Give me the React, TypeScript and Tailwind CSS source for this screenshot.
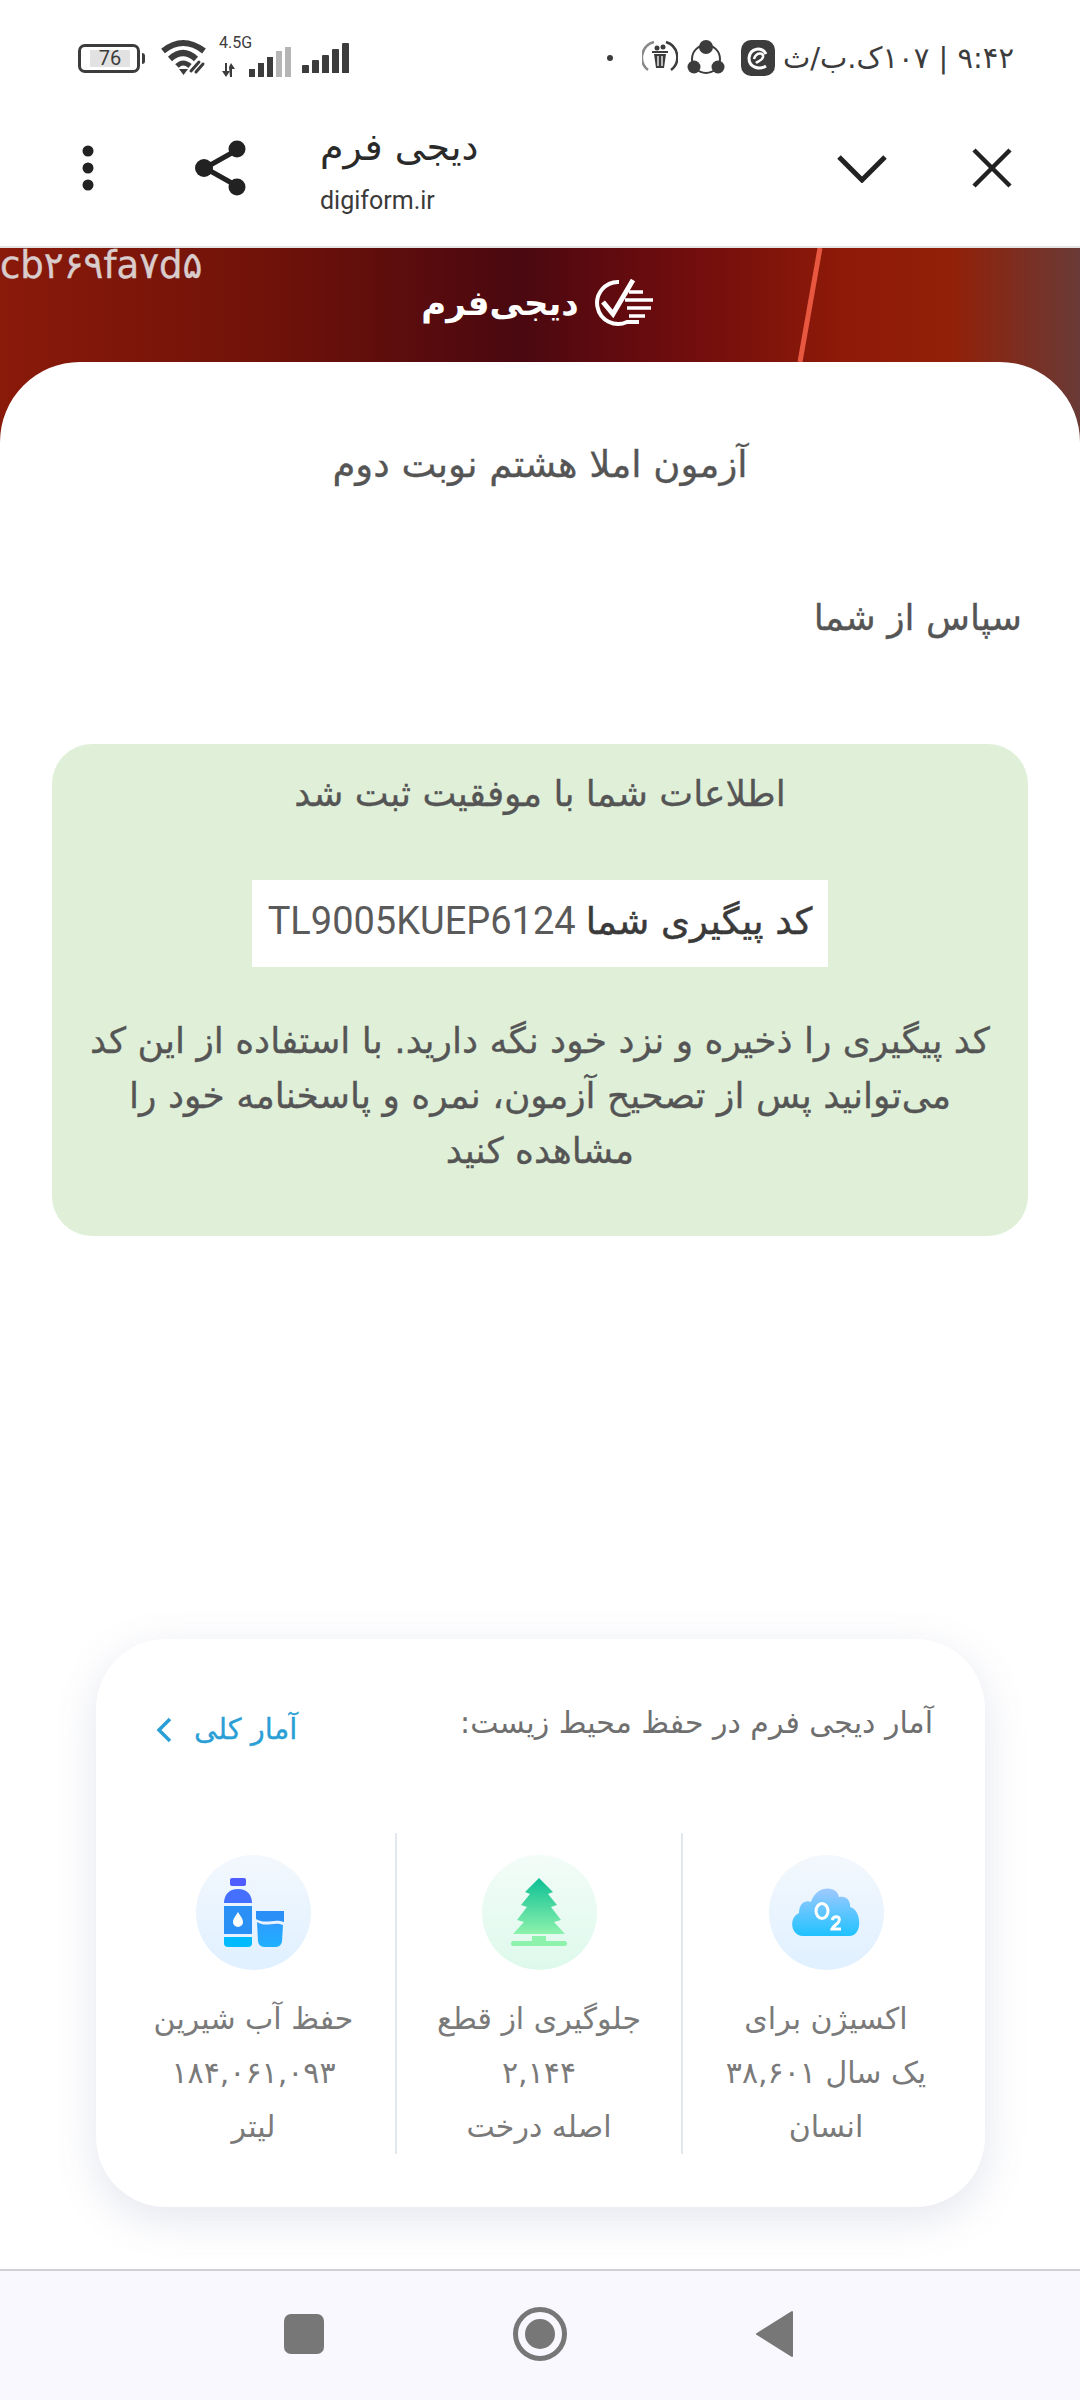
import React from "react";

const fa = { fontFamily: '"DejaVu Sans", "Noto Sans", sans-serif' };

function Battery() {
  return (
    <div className="flex items-center">
      <div className="w-[62px] h-[29px] rounded-[7px] border-[3px] border-[#3c3c3c] p-[3px] flex">
        <div className="w-[40px] h-full bg-[#e2e2e2] flex items-center justify-center ml-[6px] text-[20px] text-[#3c3c3c] font-['Roboto']">76</div>
      </div>
      <div className="w-[3px] h-[11px] ml-[2px] bg-[#3c3c3c] rounded-r" />
    </div>
  );
}

function Wifi() {
  return (
    <svg width="50" height="38" viewBox="0 0 48 38" fill="none">
      <path d="M3 12 Q23 -4 44 12" stroke="#3c3c3c" strokeWidth="6" />
      <path d="M10 20 Q23 8 36 20" stroke="#3c3c3c" strokeWidth="6" />
      <path d="M17 27 Q23 21 30 27" stroke="#3c3c3c" strokeWidth="5" />
      <path d="M19 30 L23.500 36 L28 30 Z" fill="#3c3c3c" />
      <path d="M31 32 L39 23 M36 33 L43 25" stroke="#3c3c3c" strokeWidth="3" strokeLinecap="round" />
    </svg>
  );
}

function Bars() {
  const hs = [8, 13, 18, 24, 30];
  return (
    <div className="flex items-end gap-[3px] h-[30px]">
      {hs.map((h, i) => (
        <div key={i} className="w-[7px] bg-[#3c3c3c] rounded-t-[1px]" style={{ height: h }} />
      ))}
    </div>
  );
}

function Mobile45() {
  return (
    <div className="relative w-[72px] h-[40px] ml-[10px]">
      <span className="absolute left-0 top-[-4px] text-[16px] leading-[18px] text-[#3c3c3c] font-['Roboto']">4.5G</span>
      <svg className="absolute left-[2px] bottom-[1px]" width="14" height="14" viewBox="0 0 14 14">
        <path d="M4 0H6V8H9L5 14L1 8H4Z M9 14H11V6H14L10 0L8 4Z" fill="#3c3c3c" />
      </svg>
      <div className="absolute right-0 bottom-[1px] flex items-end gap-[3px]">
        <div className="w-[6px] h-[8px] bg-[#3c3c3c]" />
        <div className="w-[6px] h-[14px] bg-[#3c3c3c]" />
        <div className="w-[6px] h-[20px] bg-[#3c3c3c]" />
        <div className="w-[6px] h-[26px] bg-[#b5b5b5]" />
        <div className="w-[6px] h-[30px] bg-[#b5b5b5]" />
      </div>
    </div>
  );
}

function TrashIcon() {
  return (
    <svg width="36" height="38" viewBox="0 0 36 38" fill="none">
      <path d="M12 3 A16 16 0 0 0 6 31" stroke="#888" strokeWidth="2.500" />
      <path d="M24 3 A16 16 0 0 1 29 31" stroke="#3c3c3c" strokeWidth="2.500" />
      <path d="M12 15H24L22 29H14Z" fill="#3c3c3c" />
      <path d="M10 13H26" stroke="#3c3c3c" strokeWidth="2" />
      <circle cx="15" cy="9" r="2.500" fill="#3c3c3c" />
      <circle cx="21" cy="8" r="2.500" fill="#3c3c3c" />
      <path d="M16 17V27M20 17V27" stroke="#fff" strokeWidth="1.300" />
    </svg>
  );
}

function ShareItIcon() {
  return (
    <svg width="38" height="38" viewBox="0 0 38 38" fill="none">
      <circle cx="19" cy="20" r="14" stroke="#3c3c3c" strokeWidth="2" />
      <circle cx="19" cy="8" r="7" fill="#3c3c3c" />
      <circle cx="7" cy="28" r="6.500" fill="#3c3c3c" />
      <circle cx="31" cy="28" r="6.500" fill="#3c3c3c" />
    </svg>
  );
}

function EIcon() {
  return (
    <svg width="36" height="38" viewBox="0 0 36 38" fill="none">
      <rect x="1" y="1" width="34" height="36" rx="10" fill="#3c3c3c" />
      <path d="M26 15 C22 7 10 9 9 19 C9 29 20 31 26 27" stroke="#fff" strokeWidth="3" />
      <path d="M14 20 C16 13 24 13 23 18 C22 22 18 22 16 24" stroke="#fff" strokeWidth="2.500" />
    </svg>
  );
}

function StatusBar() {
  return (
    <div className="h-[112px] pl-[78px] pr-[66px] flex items-center justify-between pt-[4px]">
      <div className="flex items-center">
        <Battery />
        <div className="ml-[14px]"><Wifi /></div>
        <Mobile45 />
        <div className="ml-[11px]"><Bars /></div>
      </div>
      <div className="flex items-center">
        <div className="w-[6px] h-[6px] rounded-full bg-[#3c3c3c] mr-[29px]" />
        <TrashIcon />
        <div className="ml-[9px]"><ShareItIcon /></div>
        <div className="ml-[15px]"><EIcon /></div>
        <span dir="rtl" className="ml-[7px] text-[29px] leading-none text-[#3c3c3c] whitespace-nowrap" style={fa}>۹:۴۲ | ۱۰۷ک.ب/ث</span>
      </div>
    </div>
  );
}

function Toolbar() {
  return (
    <div className="h-[136px] pb-[22px] flex items-center border-b-2 border-[#e4e4e4] bg-white">
      <svg className="ml-[82px]" width="12" height="46" viewBox="0 0 12 46">
        <circle cx="6" cy="6" r="5.500" fill="#222" />
        <circle cx="6" cy="23" r="5.500" fill="#222" />
        <circle cx="6" cy="40" r="5.500" fill="#222" />
      </svg>
      <svg className="ml-[101px]" width="52" height="56" viewBox="0 0 52 56" fill="none">
        <path d="M42 10 L10 28 L42 46" stroke="#222" strokeWidth="5" />
        <circle cx="42" cy="9" r="8.500" fill="#222" />
        <circle cx="9" cy="28" r="9" fill="#222" />
        <circle cx="42" cy="47" r="8.500" fill="#222" />
      </svg>
      <div className="ml-[73px] flex flex-col items-start pt-[4px]">
        <span dir="rtl" className="text-[38px] leading-[50px] text-[#2a2a2a]" style={fa}>دیجی فرم</span>
        <span className="text-[25px] leading-[34px] mt-[12px] text-[#3a3a3a] font-['Roboto']">digiform.ir</span>
      </div>
      <div className="flex-1" />
      <svg width="52" height="30" viewBox="0 0 52 30" fill="none">
        <path d="M3 4 L26 27 L49 4" stroke="#222" strokeWidth="5" />
      </svg>
      <svg className="ml-[84px] mr-[68px]" width="40" height="40" viewBox="0 0 40 40" fill="none">
        <path d="M2 2 L38 38 M38 2 L2 38" stroke="#222" strokeWidth="4.500" />
      </svg>
    </div>
  );
}

function BannerHeader() {
  return (
    <div className="relative z-10 h-[114px]">
      <span className="absolute left-0 top-[0px] text-[37px] leading-[36px] text-[#d9cccc] [-webkit-text-stroke:0.4px_#d9cccc]" style={fa}>cb۲۶۹fa۷d۵</span>
      <div className="flex items-center justify-center pt-[30px] gap-[8px]">
        <span dir="rtl" className="text-[34px] leading-[46px] font-bold text-white" style={fa}>دیجی‌فرم</span>
        <svg width="72" height="50" viewBox="0 0 68 50" fill="none">
          <path d="M30 4 A21 21 0 1 0 38 44 H50" stroke="#fff" strokeWidth="4" />
          <path d="M14 24 L24 36 L44 2" stroke="#fff" strokeWidth="5" />
          <path d="M40 14H54M36 22H64M38 30H62M40 38H56" stroke="#fff" strokeWidth="3.500" />
        </svg>
      </div>
    </div>
  );
}

function Stat({ lines, icon, bg }: { lines: string[]; icon: React.ReactNode; bg: string }) {
  return (
    <div className="flex flex-col items-center h-full">
      <div className={"w-[115px] h-[115px] rounded-full flex items-center justify-center mt-[22px] " + bg}>{icon}</div>
      <div className="mt-[22px] text-center text-[30px] leading-[54px] text-[#7a7a7a] whitespace-nowrap" style={fa}>
        {lines.map((l) => <div key={l}>{l}</div>)}
      </div>
    </div>
  );
}

function BottleIcon() {
  return (
    <svg width="60" height="70" viewBox="0 0 60 70">
      <defs>
        <linearGradient id="b2" x1="0" y1="0" x2="0" y2="1"><stop offset="0" stopColor="#2f9bff" /><stop offset="1" stopColor="#1fb0ff" /></linearGradient>
      </defs>
      <rect x="6" y="0" width="16" height="8" rx="2" fill="#4f5cff" />
      <path d="M14 11 C5 11 0 17 0 25 H28 C28 17 23 11 14 11Z" fill="#4570ff" />
      <rect x="0" y="28" width="28" height="28" fill="#2a90f5" />
      <path d="M0 59 H28 V65 A4 4 0 0 1 24 69 H4 A4 4 0 0 1 0 65Z" fill="#00bbff" />
      <path d="M14 34 C11 39 9 41 9 44 A5 5 0 0 0 19 44 C19 41 17 39 14 34Z" fill="#fff" />
      <path d="M32 33 H60 V44 C50 40 42 47 32 41Z" fill="#2a8ff7" />
      <path d="M33 44 C42 50 50 43 59 47 L58 63 A6 6 0 0 1 52 69 H40 A6 6 0 0 1 34 63Z" fill="url(#b2)" />
    </svg>
  );
}

function TreeIcon() {
  return (
    <svg width="64" height="70" viewBox="0 0 64 70">
      <defs>
        <linearGradient id="t1" x1="0" y1="0" x2="0" y2="1"><stop offset="0" stopColor="#0cbf95" /><stop offset="1" stopColor="#8df2ac" /></linearGradient>
      </defs>
      <path d="M32 0 L46 14 L41 16 L50 27 L44 29 L54 42 L47 44 L58 56 H6 L17 44 L10 42 L20 29 L14 27 L23 16 L18 14Z" fill="url(#t1)" />
      <rect x="25" y="58" width="14" height="6" fill="#8df2ac" />
      <rect x="4" y="63" width="56" height="5" rx="2.500" fill="#8df2ac" />
    </svg>
  );
}

function CloudIcon() {
  return (
    <svg width="70" height="50" viewBox="0 0 70 50">
      <defs>
        <linearGradient id="c1" x1="0" y1="0" x2="0" y2="1"><stop offset="0" stopColor="#9fc9ff" /><stop offset="1" stopColor="#1fc2ff" /></linearGradient>
      </defs>
      <path d="M12 48 C0 48 -3 30 8 25 C8 14 16 12 20 14 C25 -3 46 -3 48 9 C56 7 60 14 59 19 C71 22 72 48 58 48Z" fill="url(#c1)" />
      <ellipse cx="31" cy="23" rx="6" ry="7.500" fill="none" stroke="#fff" strokeWidth="3" />
      <path d="M41 32 C43 27 50 28 48 33 C47 36 42 38 41 41 H50" fill="none" stroke="#fff" strokeWidth="3" />
    </svg>
  );
}

function StatsCard() {
  return (
    <div className="mx-[96px] w-[889px] h-[568px] rounded-[70px] bg-white shadow-[0_12px_44px_rgba(90,100,150,0.16)] px-[16px] flex flex-col">
      <div className="h-[194px] flex items-center justify-between pl-[43px] pr-[36px] pb-[12px]" dir="rtl">
        <span className="text-[30px] text-[#6f6f6f] pb-[16px] whitespace-nowrap" style={fa}>آمار دیجی فرم در حفظ محیط زیست:</span>
        <div className="flex items-center gap-[21px]">
          <span className="text-[29px] text-[#2a9fd6] whitespace-nowrap [-webkit-text-stroke:0.3px_#2a9fd6]" style={fa}>آمار کلی</span>
          <svg width="18" height="28" viewBox="0 0 18 28" fill="none"><path d="M15 3 L4 14 L15 25" stroke="#2a9fd6" strokeWidth="3.500" /></svg>
        </div>
      </div>
      <div className="grid grid-cols-[283px_288px_1fr] h-[321px]">
        <Stat bg="bg-gradient-to-b from-[#f3f8fd] to-[#e0f0ff]" icon={<BottleIcon />} lines={["حفظ آب شیرین", "۱۸۴,۰۶۱,۰۹۳", "لیتر"]} />
        <div className="border-x-2 border-[#e3e6ee]">
          <Stat bg="bg-gradient-to-b from-[#f3fcf8] to-[#def9ec]" icon={<TreeIcon />} lines={["جلوگیری از قطع", "۲,۱۴۴", "اصله درخت"]} />
        </div>
        <Stat bg="bg-gradient-to-b from-[#f3f8fd] to-[#e0f0ff]" icon={<CloudIcon />} lines={["اکسیژن برای", "یک سال ۳۸,۶۰۱", "انسان"]} />
      </div>
    </div>
  );
}

function NavBar() {
  return (
    <div className="h-[131px] border-t-2 border-[#d0d0d6] bg-[#f8f8fe] flex items-center pb-[4px]">
      <div className="ml-[284px] w-[40px] h-[40px] rounded-[7px] bg-[#777]" />
      <div className="ml-[189px] w-[54px] h-[54px] rounded-full border-[5px] border-[#777] flex items-center justify-center">
        <div className="w-[30px] h-[30px] rounded-full bg-[#777]" />
      </div>
      <svg className="ml-[188px]" width="40" height="48" viewBox="0 0 40 48">
        <path d="M37 2 V46 L2 24Z" fill="#777" stroke="#777" strokeWidth="2" strokeLinejoin="round" />
      </svg>
    </div>
  );
}

export default function App() {
  return (
    <div className="w-[1080px] h-[2400px] bg-white flex flex-col overflow-hidden">
      <StatusBar />
      <Toolbar />
      <div className="relative flex-1 flex flex-col">
        <div className="absolute inset-x-0 top-0 h-[240px] bg-[linear-gradient(90deg,#8a1a0a_0%,#701209_25%,#4a0810_48%,#6d0c0e_62%,#8e1a08_78%,#922008_88%,#6a3a36_100%)]" />
        <svg className="absolute top-0 left-[790px]" width="40" height="114" viewBox="0 0 40 114">
          <path d="M30 0 L10 114" stroke="#e8573f" strokeWidth="5" />
        </svg>
        <BannerHeader />
        <div className="relative z-10 flex-1 rounded-t-[80px] bg-white flex flex-col" dir="rtl" style={fa}>
          <h1 className="mt-[81px] text-center text-[37px] leading-[44px] text-[#555] font-normal [-webkit-text-stroke:0.3px_#555]">آزمون املا هشتم نوبت دوم</h1>
          <p className="mt-[109px] mr-[58px] text-[36px] leading-[44px] text-[#555] [-webkit-text-stroke:0.3px_#555]">سپاس از شما</p>
          <div className="mt-[104px] mx-[52px] h-[492px] rounded-[40px] bg-[#dfefd8] flex flex-col items-center text-center text-[#555] px-[30px] pt-[28px] [-webkit-text-stroke:0.3px_#555]">
            <p className="text-[36px] leading-[44px]">اطلاعات شما با موفقیت ثبت شد</p>
            <div className="mt-[64px] w-[576px] h-[87px] bg-white flex items-center justify-center text-[37px] pb-[4px] whitespace-nowrap">
              <span className="text-[#3a3a3a] [-webkit-text-stroke:0.5px_#3a3a3a]">کد پیگیری شما</span>
              <span className="font-['Roboto'] mr-[10px] text-[#5a5a5a] text-[38px] [-webkit-text-stroke:0px]">TL9005KUEP6124</span>
            </div>
            <p className="mt-[46px] text-[36px] leading-[55px]">کد پیگیری را ذخیره و نزد خود نگه دارید. با استفاده از این کد می‌توانید پس از تصحیح آزمون، نمره و پاسخنامه خود را مشاهده کنید</p>
          </div>
          <div className="flex-1" />
          <div dir="ltr"><StatsCard /></div>
          <div className="h-[62px]" />
        </div>
      </div>
      <NavBar />
    </div>
  );
}
